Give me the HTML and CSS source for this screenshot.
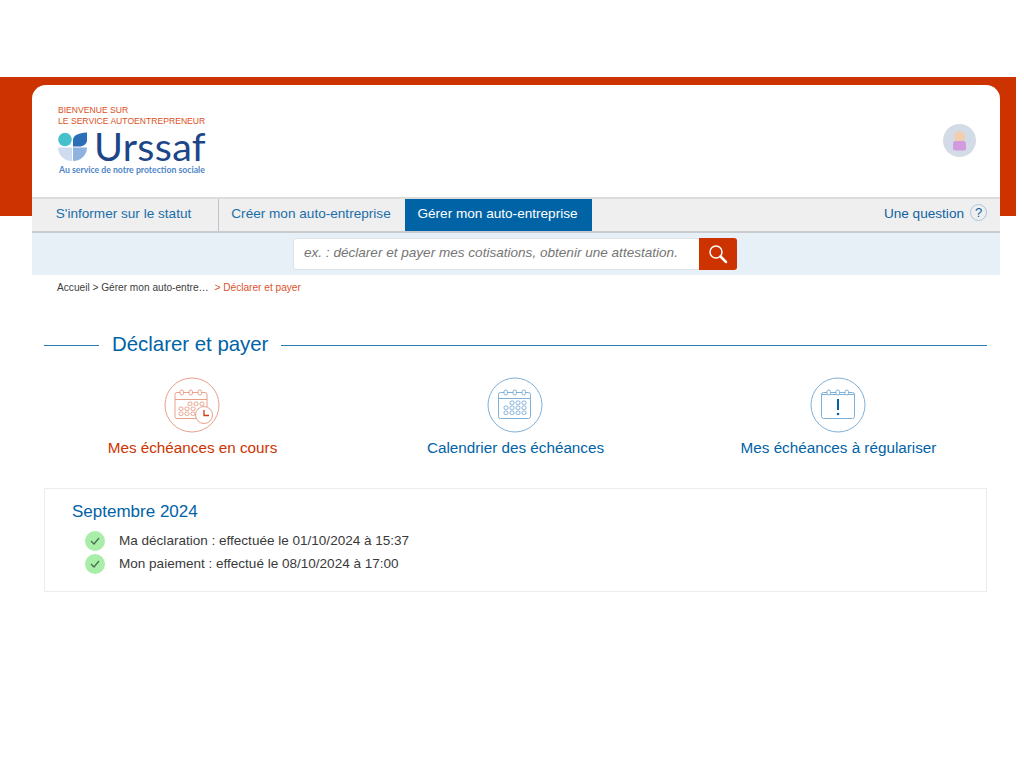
FILE: index.html
```html
<!DOCTYPE html>
<html lang="fr">
<head>
<meta charset="utf-8">
<title>Déclarer et payer</title>
<link rel="stylesheet" href="styles.css">
</head>
<body>
<div class="band"></div>
<div class="shell">
  <header class="head">
    <div class="brand">
      <div class="welcome">BIENVENUE SUR<br>LE SERVICE AUTOENTREPRENEUR</div>
      <div class="logo">
        <svg class="mark" width="30" height="29" viewBox="0 0 30 29">
          <circle cx="7" cy="7.500" r="6.800" fill="#45c1cb"/>
          <path d="M15 14.500V8C15 3.500 20 1 29 .5V8c0 4-3.500 6.500-8 6.500z" fill="#2a6fb8"/>
          <path d="M0 15.500h14V29C6 29 0 23 0 15.500z" fill="#cfdcf0"/>
          <path d="M15 15.500h14C29 23 23 29 15 29z" fill="#8fb2de"/>
        </svg>
        <span class="wordmark">Urssaf</span>
      </div>
      <div class="tagline">Au service de notre protection sociale</div>
    </div>
    <div class="avatar">
      <svg width="33" height="33" viewBox="0 0 33 33">
        <circle cx="16.500" cy="16.500" r="16.500" fill="#d3dce6"/>
        <circle cx="16.500" cy="12.500" r="5.500" fill="#f2cdb0"/>
        <path d="M10 19.500q0-2 2-2.500h9q2 .5 2 2.500v5q0 2-2 2h-9q-2 0-2-2z" fill="#d29adf"/>
      </svg>
    </div>
  </header>
  <nav class="nav">
    <a class="tab first">S'informer sur le statut</a>
    <a class="tab second">Créer mon auto-entreprise</a>
    <a class="tab active">Gérer mon auto-entreprise</a>
    <a class="help">Une question <span class="qmark">?</span></a>
  </nav>
  <div class="searchbar">
    <div class="search">
      <span class="placeholder">ex. : déclarer et payer mes cotisations, obtenir une attestation.</span>
      <span class="go">
        <svg width="20" height="20" viewBox="0 0 20 20" fill="none" stroke="#fff">
          <circle cx="8" cy="8" r="6" stroke-width="1.500"/>
          <path d="M12.500 12.500L18 18" stroke-width="2.500" stroke-linecap="round"/>
        </svg>
      </span>
    </div>
  </div>
  <div class="crumbs">Accueil &gt; Gérer mon auto-entre… <span class="here">&gt; Déclarer et payer</span></div>
</div>

<main class="main">
  <div class="heading"><span class="rule short"></span><h1>Déclarer et payer</h1><span class="rule"></span></div>

  <div class="options">
    <a class="option current">
      <svg class="ico" width="56" height="56" viewBox="0 0 56 56" fill="none" stroke="#e8a08c" stroke-width="1">
        <circle cx="28" cy="28" r="27"/>
        <rect x="11" y="15.500" width="32" height="26" rx="2"/>
        <path d="M11 22.500h32"/>
        <rect x="16" y="13" width="3.500" height="5" rx="1.700" fill="#fff"/>
        <rect x="25" y="13" width="3.500" height="5" rx="1.700" fill="#fff"/>
        <rect x="34" y="13" width="3.500" height="5" rx="1.700" fill="#fff"/>
        <g>
          <rect x="24" y="25" width="4" height="3.500" rx="1.500"/><rect x="30" y="25" width="4" height="3.500" rx="1.500"/><rect x="36" y="25" width="4" height="3.500" rx="1.500"/>
          <rect x="15" y="30" width="4" height="3.500" rx="1.500"/><rect x="21" y="30" width="4" height="3.500" rx="1.500"/><rect x="27" y="30" width="4" height="3.500" rx="1.500"/>
          <rect x="15" y="35" width="4" height="3.500" rx="1.500"/><rect x="21" y="35" width="4" height="3.500" rx="1.500"/><rect x="27" y="35" width="4" height="3.500" rx="1.500"/>
        </g>
        <circle cx="40" cy="38" r="8.500" fill="#fff"/>
        <path d="M40 33v5.500h5" stroke="#cf3a10" stroke-width="1.300"/>
      </svg>
      <span class="label">Mes échéances en cours</span>
    </a>
    <a class="option">
      <svg class="ico" width="56" height="56" viewBox="0 0 56 56" fill="none" stroke="#7fb0d8" stroke-width="1">
        <circle cx="28" cy="28" r="27"/>
        <rect x="11.500" y="15.500" width="32" height="26" rx="2"/>
        <path d="M11.500 21.500h32"/>
        <rect x="17" y="13" width="3.500" height="5" rx="1.700" fill="#fff"/>
        <rect x="26" y="13" width="3.500" height="5" rx="1.700" fill="#fff"/>
        <rect x="35" y="13" width="3.500" height="5" rx="1.700" fill="#fff"/>
        <g>
          <rect x="23" y="24" width="4" height="3.500" rx="1.500"/><rect x="29" y="24" width="4" height="3.500" rx="1.500"/><rect x="35" y="24" width="4" height="3.500" rx="1.500"/>
          <rect x="17" y="29" width="4" height="3.500" rx="1.500"/><rect x="23" y="29" width="4" height="3.500" rx="1.500"/><rect x="29" y="29" width="4" height="3.500" rx="1.500"/><rect x="35" y="29" width="4" height="3.500" rx="1.500"/>
          <rect x="17" y="34" width="4" height="3.500" rx="1.500"/><rect x="23" y="34" width="4" height="3.500" rx="1.500"/><rect x="29" y="34" width="4" height="3.500" rx="1.500"/><rect x="35" y="34" width="4" height="3.500" rx="1.500"/>
        </g>
      </svg>
      <span class="label">Calendrier des échéances</span>
    </a>
    <a class="option">
      <svg class="ico" width="56" height="56" viewBox="0 0 56 56" fill="none" stroke="#7fb0d8" stroke-width="1">
        <circle cx="28" cy="28" r="27"/>
        <rect x="11.500" y="15.500" width="33" height="26" rx="2"/>
        <path d="M11.500 17.500h33"/>
        <rect x="17" y="13" width="3.500" height="5" rx="1.700" fill="#fff"/>
        <rect x="26" y="13" width="3.500" height="5" rx="1.700" fill="#fff"/>
        <rect x="35" y="13" width="3.500" height="5" rx="1.700" fill="#fff"/>
        <path d="M28 22v11" stroke="#0063a6" stroke-width="2"/>
        <circle cx="28" cy="37" r="1.300" fill="#0063a6" stroke="none"/>
      </svg>
      <span class="label">Mes échéances à régulariser</span>
    </a>
  </div>

  <section class="panel">
    <h2>Septembre 2024</h2>
    <ul class="steps">
      <li><span class="ok"><svg width="10" height="8" viewBox="0 0 10 8" fill="none" stroke="#4a6a52" stroke-width="1.200"><path d="M1 4l3 3 5-6"/></svg></span>Ma déclaration : effectuée le 01/10/2024 à 15:37</li>
      <li><span class="ok"><svg width="10" height="8" viewBox="0 0 10 8" fill="none" stroke="#4a6a52" stroke-width="1.200"><path d="M1 4l3 3 5-6"/></svg></span>Mon paiement : effectué le 08/10/2024 à 17:00</li>
    </ul>
  </section>
</main>
</body>
</html>
```
FILE: styles.css
```css
* { box-sizing: border-box; }
html, body { margin: 0; background: #fff; }
body {
  padding-top: 85px;
  font-family: "Liberation Sans", Arial, sans-serif;
  position: relative;
}
.band {
  position: absolute;
  left: 0;
  top: 77px;
  width: 1016px;
  height: 139px;
  background: #cc3300;
}
.shell {
  position: relative;
  margin-left: 32px;
  width: 968px;
}
.head {
  height: 112px;
  background: #fff;
  border-radius: 14px 14px 0 0;
  padding: 20px 24px 0 26px;
  display: flex;
  justify-content: space-between;
}
.welcome {
  font-size: 8.600px;
  line-height: 11px;
  color: #dc4f24;
}
.logo {
  display: flex;
  align-items: center;
  gap: 6px;
  margin-top: 3px;
  height: 32px;
}
.mark { flex: none; }
.wordmark {
  font-family: Lato, sans-serif;
  font-size: 39.500px;
  line-height: 32px;
  font-weight: 400;
  color: #1d4689;
  letter-spacing: .3px;
}
.tagline {
  margin: 2px 0 0 1px;
  font-size: 8.700px;
  line-height: 11px;
  font-weight: 700;
  color: #4f86c6;
  font-family: Lato, sans-serif;
}
.avatar { margin-top: 18.500px; }
.nav {
  height: 36px;
  display: flex;
  align-items: stretch;
  background: #efefef;
  border-top: 2px solid #dcdcdc;
  border-bottom: 2px solid #c8ccd0;
  font-size: 13.600px;
  color: #1a6ea8;
}
.tab {
  display: flex;
  align-items: center;
  justify-content: center;
  padding-bottom: 3px;
}
.first { width: 187px; border-right: 1px solid #c0c4c8; padding-right: 3px; }
.second { width: 186px; padding-right: 2px; }
.active {
  width: 187px;
  background: #0063a6;
  color: #fff;
  padding-right: 2px;
}
.help {
  margin-left: auto;
  padding: 0 13px 3px 0;
  display: flex;
  align-items: center;
  gap: 6px;
  color: #0f63a0;
  font-size: 13.600px;
}
.qmark {
  width: 17px;
  height: 17px;
  margin-top: -3px;
  border: 1px solid #a9c6de;
  border-radius: 50%;
  font-size: 13px;
  line-height: 15px;
  text-align: center;
}
.searchbar {
  height: 42px;
  background: #e8f0f7;
  padding-top: 5px;
  padding-left: 261px;
}
.search {
  width: 444px;
  height: 32px;
  display: flex;
  justify-content: space-between;
  background: #fff;
  border: 1px solid #dde3e8;
  border-radius: 3px;
  padding-left: 10px;
}
.placeholder {
  font-size: 13.570px;
  line-height: 28px;
  font-style: italic;
  color: #757575;
}
.go {
  width: 38px;
  margin: -1px -1px -1px 0;
  background: #cc3300;
  border-radius: 0 3px 3px 0;
  display: flex;
  align-items: center;
  justify-content: center;
}
.crumbs {
  padding: 6px 0 0 25px;
  font-size: 10.150px;
  line-height: 14px;
  color: #3c3c3c;
}
.here { color: #d9542c; margin-left: 3px; }
.main {
  margin: 0 37px 0 44px;
}
.heading {
  display: flex;
  align-items: center;
  gap: 13px;
  margin-top: 37px;
  height: 24px;
}
.rule {
  flex: 1;
  height: 1px;
  margin-top: 3px;
  background: #2a7ab4;
}
.rule.short { flex: none; width: 55px; }
h1 {
  margin: 0;
  font-size: 20.400px;
  line-height: 24px;
  font-weight: 400;
  color: #0063a6;
}
.options {
  display: grid;
  grid-template-columns: repeat(3, 323px);
  margin: 21px 0 0 -13px;
}
.option {
  display: flex;
  flex-direction: column;
  align-items: center;
  color: #0063a6;
  font-size: 15.250px;
}
.current { color: #cc3300; }
.ico { display: block; margin-left: -1px; }
.label { margin-top: 5px; line-height: 20px; }
.panel {
  margin-top: 30px;
  height: 104px;
  border: 1px solid #ececec;
  padding: 13px 27px 0;
}
h2 {
  margin: 0;
  font-size: 17px;
  line-height: 20px;
  font-weight: 400;
  color: #0063a6;
}
.steps {
  list-style: none;
  margin: 7px 0 0 13px;
  padding: 0;
  font-size: 13.540px;
  color: #3a3a3a;
}
.steps li {
  display: flex;
  align-items: center;
  gap: 14px;
  height: 23px;
}
.ok {
  width: 20px;
  height: 20px;
  border-radius: 50%;
  background: #a8eda8;
  display: flex;
  align-items: center;
  justify-content: center;
}
```
